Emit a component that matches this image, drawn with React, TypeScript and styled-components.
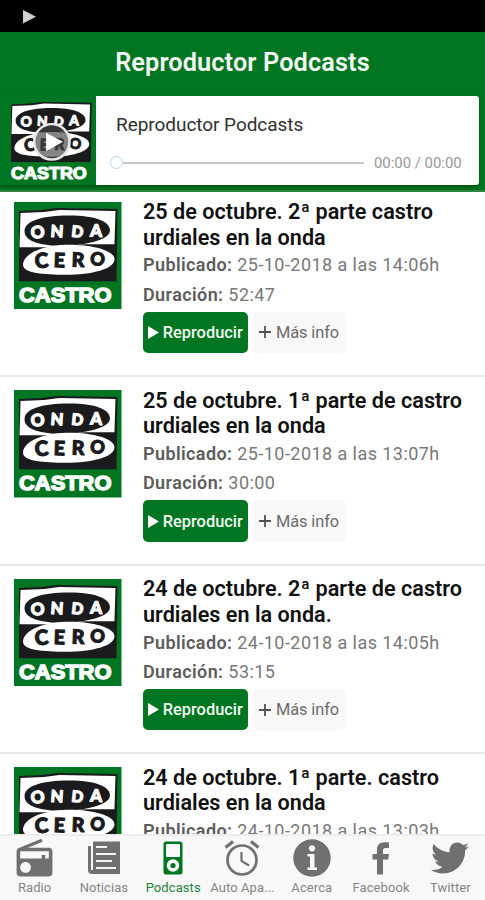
import React from "react";
import styled, { createGlobalStyle } from "styled-components";
import { MdRadio } from "react-icons/md";
import { FaTwitter } from "react-icons/fa";

const GREEN = "#007522";

const GlobalStyle = createGlobalStyle`
  * { box-sizing: border-box; }
  body { margin: 0; background: #fff; }
  svg { display: block; flex: none; }
`;

const Screen = styled.div`
  width: 485px;
  height: 900px;
  display: flex;
  flex-direction: column;
  overflow: hidden;
  background: #fff;
  font-family: Roboto, "Liberation Sans", sans-serif;
`;

const StatusBar = styled.div`
  flex: none;
  height: 32px;
  padding: 10px 0 0 23px;
  background: #000;
`;

const Header = styled.header`
  flex: none;
  height: 159.5px;
  background: ${GREEN};
  border-bottom: 2px solid #2c843f;
`;

const HeaderTitle = styled.h1`
  margin: 0;
  height: 63.5px;
  padding-top: 14.5px;
  text-align: center;
  font-size: 25.3px;
  line-height: 32px;
  font-weight: 600;
  letter-spacing: 0.12px;
  color: #f4faf3;
`;

const Player = styled.section`
  display: flex;
  height: 89px;
  margin-right: 6px;
  box-shadow: 0 2px 3px rgba(0, 50, 0, 0.55);
`;

const Cover = styled.div`
  flex: none;
  width: 96px;
  background: ${GREEN};
  padding: 1px 0 0 7px;
`;

const PlayerPanel = styled.div`
  flex: 1;
  padding: 17px 17px 0 20px;
  background: #fff;
  border-radius: 0 3px 3px 0;
`;

const PlayerTitle = styled.div`
  font-size: 19px;
  line-height: 24px;
  letter-spacing: -0.05px;
  color: #303030;
`;

const ProgressRow = styled.div`
  display: flex;
  align-items: center;
  height: 20px;
  margin: 16px 0 0 -6px;
`;

const Knob = styled.span`
  flex: none;
  width: 13px;
  height: 13px;
  border: 1.5px solid #b5d6f6;
  border-radius: 50%;
  background: #fff;
`;

const Track = styled.span`
  flex: 1;
  height: 2px;
  background: #c6c6c6;
`;

const Time = styled.span`
  flex: none;
  width: 98px;
  padding-left: 10px;
  font-size: 14.9px;
  white-space: nowrap;
  color: #989898;
`;

const List = styled.main`
  flex: 1;
  min-height: 0;
  overflow: hidden;
`;

const Episode = styled.article`
  display: flex;
  gap: 21.5px;
  height: 188.6px;
  padding: 13px 0 0 14px;
  border-bottom: 2px solid #e8e8e8;
  &:first-child {
    height: 185.6px;
    padding-top: 10px;
  }
`;

const Details = styled.div`
  flex: 1;
  margin-top: -2.5px;
`;

const EpisodeTitle = styled.h2`
  margin: 0;
  font-size: 21.6px;
  line-height: 25.7px;
  font-weight: 600;
  letter-spacing: 0.02px;
  white-space: pre-line;
  color: #111;
`;

const Meta = styled.p`
  margin: 0;
  font-size: 18px;
  line-height: 29.4px;
  letter-spacing: 0.44px;
  white-space: nowrap;
  color: #787878;
  strong { font-weight: 600; letter-spacing: 0.4px; color: #5c5c5c; }
`;

const Actions = styled.div`
  display: flex;
  gap: 5px;
  margin-top: 2.5px;
`;

const Button = styled.button<{ $primary?: boolean }>`
  display: flex;
  align-items: center;
  justify-content: center;
  gap: ${(p) => (p.$primary ? 3.5 : 5)}px;
  width: ${(p) => (p.$primary ? 105 : 93)}px;
  height: 41.5px;
  padding: ${(p) => (p.$primary ? 0 : "0 1px 0 0")};
  border: 0;
  border-radius: 5px;
  font-family: inherit;
  font-size: 16.4px;
  font-weight: ${(p) => (p.$primary ? 500 : 400)};
  letter-spacing: ${(p) => (p.$primary ? 0 : -0.1)}px;
  color: ${(p) => (p.$primary ? "#f1f8f0" : "#6c6c6c")};
  background: ${(p) => (p.$primary ? GREEN : "#f8f8f8")};
`;

const TabBar = styled.nav`
  flex: none;
  display: grid;
  grid-template-columns: repeat(7, 1fr);
  height: 66px;
  background: #f8f8f8;
  border-top: 2px solid #ededed;
`;

const Tab = styled.div<{ $active?: boolean }>`
  display: flex;
  flex-direction: column;
  align-items: center;
  min-width: 0;
  color: ${(p) => (p.$active ? GREEN : "#707070")};
`;

const TabIcon = styled.div`
  display: flex;
  align-items: center;
  justify-content: center;
  height: 44px;
`;

const TabLabel = styled.span<{ $active?: boolean }>`
  font-size: 13px;
  line-height: 16px;
  letter-spacing: 0.08px;
  white-space: nowrap;
  color: ${(p) => (p.$active ? "#23823c" : "#858585")};
`;

function Letter({ x, y, r = 0, fill, size = 19, children }: {
  x: number; y: number; r?: number; fill: string; size?: number; children: string;
}) {
  return (
    <text
      x={x} y={y} transform={`rotate(${r} ${x} ${y})`} textAnchor="middle"
      fontFamily="Lato, sans-serif" fontWeight="900" fontSize={size} fill={fill}
      stroke={fill} strokeWidth="1.100" strokeLinejoin="round"
    >
      {children}
    </text>
  );
}

function Logo({ size, overlay }: { size: number; overlay?: boolean }) {
  const ink = "#1b1b1d";
  return (
    <svg width={size} height={size} viewBox="0 0 107 107">
      <rect width="107" height="107" fill={GREEN} />
      <path d="M5 9 L28 8 L42 6 L103 7 L102 79 L5 79Z" fill={ink} />
      <path d="M6.500 11 L30 10 L45 8 L101 9 L100 42 L70 42 L34 45 L5.500 45Z" fill="#fff" />
      <path d="M10.500 29C10.500 18 31 13.500 53 13.500C76 13 95.500 18 95.500 28C95.500 37 76 42 53 43.500C29 44 10.500 40 10.500 29Z" fill={ink} />
      <path d="M9 63C8 52 28 43 52 42.500C77 42 100 48 100 57C100 67 76 73 48 72.500C24 72 10 70 9 63Z" fill="#fff" />
      <Letter x={24} y={36} r={-5} size={17} fill="#fff">O</Letter>
      <Letter x={42.500} y={35} r={4} size={16.500} fill="#fff">N</Letter>
      <Letter x={62.500} y={35} r={6} size={15.500} fill="#fff">D</Letter>
      <Letter x={81.500} y={34.500} r={2} size={17} fill="#fff">A</Letter>
      <Letter x={28} y={65.500} r={-4} size={20.500} fill={ink}>C</Letter>
      <Letter x={45} y={65} r={2} size={19.500} fill={ink}>E</Letter>
      <Letter x={63.500} y={64.500} r={2} size={19.500} fill={ink}>R</Letter>
      <Letter x={82} y={63} r={10} size={18} fill={ink}>O</Letter>
      <text
        x="5" y="99.500" textLength="92" lengthAdjust="spacingAndGlyphs"
        fontFamily="Liberation Sans, sans-serif" fontWeight="700" fontSize="20"
        fill="#fff" stroke="#fff" strokeWidth="1.400"
      >
        CASTRO
      </text>
      {overlay && (
        <g>
          <circle cx="54.500" cy="54.500" r="21.500" fill="rgba(70,70,70,.66)" stroke="#e8e8e8" strokeWidth="3" />
          <path d="M47.500 43.500 L68 54.500 L47.500 66Z" fill="#fff" />
        </g>
      )}
    </svg>
  );
}

const NewsIcon = () => (
  <svg width="34" height="34" viewBox="0 0 34 34" fill="none">
    <path d="M6 0.500H33V33H5Q1 33 1 29V5H4V29H6Z" fill="currentColor" />
    <path d="M9 6H20M9 13H29M9 20H25M9 27H29" stroke="#f4f4f4" strokeWidth="1.800" />
  </svg>
);

const PodcastIcon = () => (
  <svg width="20" height="34" viewBox="0 0 20 34">
    <rect x="0.500" y="0.500" width="19" height="33" rx="2.500" fill="currentColor" />
    <rect x="3" y="3" width="14" height="13" rx="1" fill="#f8f8f8" />
    <circle cx="10" cy="24.500" r="6.200" fill="#f8f8f8" />
    <circle cx="10" cy="24.500" r="2.600" fill="currentColor" />
  </svg>
);

const AlarmIcon = () => (
  <svg width="36" height="36" viewBox="0 0 36 36" fill="none" stroke="currentColor">
    <circle cx="18" cy="20" r="14.500" strokeWidth="2.700" />
    <path d="M1.500 7.500 L9 1.500M27 1.500 L34.500 7.500" strokeWidth="3.200" />
    <path d="M17.500 12V21L25 25.500" strokeWidth="2.200" />
  </svg>
);

const InfoIcon = () => (
  <svg width="38" height="38" viewBox="0 0 38 38">
    <circle cx="19" cy="19" r="18.700" fill="currentColor" />
    <circle cx="19" cy="9.300" r="3.100" fill="#f8f8f8" />
    <path d="M14.500 15H21.500V28.500H24V31H14.500V28.500H17V17.500H14.500Z" fill="#f8f8f8" />
  </svg>
);

const FacebookIcon = () => (
  <svg width="18" height="33" viewBox="0 0 18 33">
    <path d="M17 0.500V6H13.500C11.500 6 11 7 11 8.700V12H17L16.200 17.500H11V32.500H5V17.500H0.500V12H5V7.800C5 3 7.800 0.300 12.300 0.300C14.500 0.300 16.300 0.400 17 0.500Z" fill="currentColor" />
  </svg>
);

const tabs = [
  { label: "Radio", icon: <MdRadio size={43} /> },
  { label: "Noticias", icon: <NewsIcon /> },
  { label: "Podcasts", icon: <PodcastIcon />, active: true },
  { label: "Auto Apa...", icon: <AlarmIcon /> },
  { label: "Acerca", icon: <InfoIcon /> },
  { label: "Facebook", icon: <FacebookIcon /> },
  { label: "Twitter", icon: <FaTwitter size={38} /> },
];

const episodes = [
  { title: "25 de octubre. 2ª parte castro\nurdiales en la onda", date: "25-10-2018 a las 14:06h", duration: "52:47" },
  { title: "25 de octubre. 1ª parte de castro\nurdiales en la onda", date: "25-10-2018 a las 13:07h", duration: "30:00" },
  { title: "24 de octubre. 2ª parte de castro\nurdiales en la onda.", date: "24-10-2018 a las 14:05h", duration: "53:15" },
  { title: "24 de octubre. 1ª parte. castro\nurdiales en la onda", date: "24-10-2018 a las 13:03h", duration: "30:00" },
];

export default function App() {
  return (
    <Screen>
      <GlobalStyle />
      <StatusBar>
        <svg width="13" height="14" viewBox="0 0 13 14"><path d="M0 0L13 6.700L0 13.500Z" fill="#d0d0d0" /></svg>
      </StatusBar>
      <Header>
        <HeaderTitle>Reproductor Podcasts</HeaderTitle>
        <Player>
          <Cover><Logo size={88} overlay /></Cover>
          <PlayerPanel>
            <PlayerTitle>Reproductor Podcasts</PlayerTitle>
            <ProgressRow>
              <Knob />
              <Track />
              <Time>00:00 / 00:00</Time>
            </ProgressRow>
          </PlayerPanel>
        </Player>
      </Header>
      <List>
        {episodes.map((e) => (
          <Episode key={e.title}>
            <Logo size={107.5} />
            <Details>
              <EpisodeTitle>{e.title}</EpisodeTitle>
              <Meta><strong>Publicado:</strong> {e.date}</Meta>
              <Meta><strong>Duración:</strong> {e.duration}</Meta>
              <Actions>
                <Button $primary>
                  <svg width="11" height="13" viewBox="0 0 11 13"><path d="M0 0L11 6.500L0 13Z" fill="#fff" /></svg>
                  Reproducir
                </Button>
                <Button>
                  <svg width="12" height="12" viewBox="0 0 12 12"><path d="M6 0V12M0 6H12" stroke="#505050" strokeWidth="1.800" /></svg>
                  Más info
                </Button>
              </Actions>
            </Details>
          </Episode>
        ))}
      </List>
      <TabBar>
        {tabs.map((t) => (
          <Tab key={t.label} $active={t.active}>
            <TabIcon>{t.icon}</TabIcon>
            <TabLabel $active={t.active}>{t.label}</TabLabel>
          </Tab>
        ))}
      </TabBar>
    </Screen>
  );
}
